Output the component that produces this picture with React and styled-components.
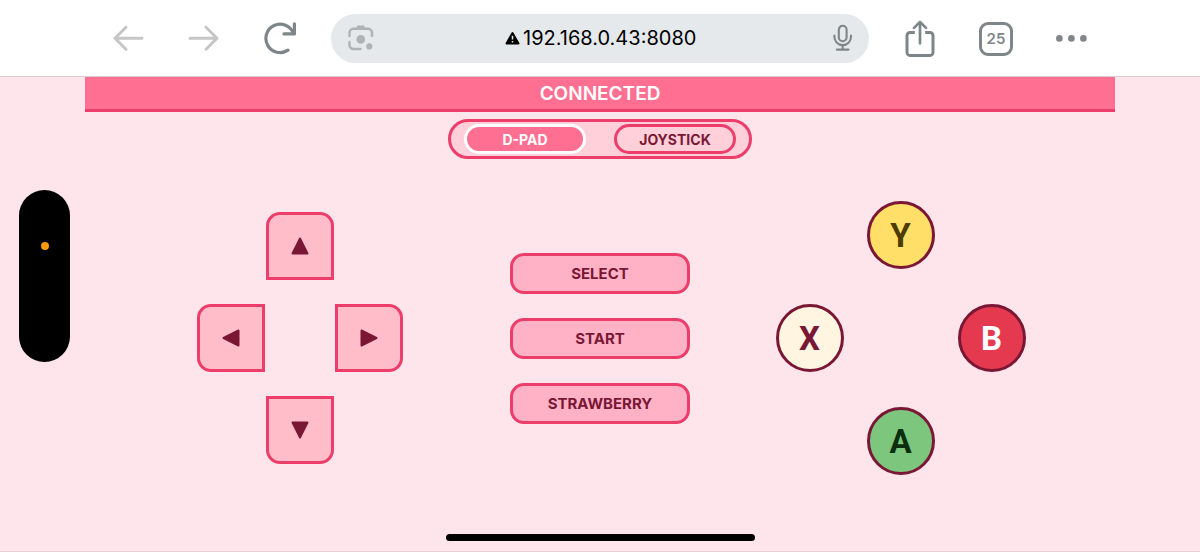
import React from 'react'
import styled, { createGlobalStyle } from 'styled-components'

const pageBg = "#fee5eb";
const rose = "#ff6f91";
const roseDark = "#ec3d6b";
const wine = "#7a1735";
const gray = "#7f8689";
const grayLight = "#c6c6c6";

const GlobalStyle = createGlobalStyle`
	* {
		box-sizing: border-box;
	}
	body {
		margin: 0;
		background: ${pageBg};
		font-family: Inter, "Liberation Sans", sans-serif;
	}
	button, input {
		font-family: inherit;
		margin: 0;
		padding: 0;
	}
	button {
		cursor: pointer;
	}
	svg {
		display: block;
		flex: none;
	}
`

const Page = styled.div`
	position: relative;
	display: flex;
	flex-direction: column;
	min-height: 100vh;
	border-bottom: 1px solid #e6d0d6;
`

const Toolbar = styled.header`
	display: flex;
	align-items: center;
	gap: 13px;
	padding: 14px 90px 13px;
	background: white;
	border-bottom: 1px solid #dccdd2;
`

const ToolGroup = styled.nav`
	display: flex;
`

const ToolButton = styled.button`
	display: flex;
	align-items: center;
	justify-content: center;
	width: 76px;
	height: 49px;
	border: none;
	background: none;
	color: ${props => props.$faded ? grayLight : gray};
`

const AddressBar = styled.div`
	flex: 1;
	display: flex;
	align-items: center;
	justify-content: space-between;
	height: 49px;
	padding: 0 16px;
	border-radius: 25px;
	background: #e5e9ec;
`

const BarButton = styled.button`
	display: flex;
	border: none;
	background: none;
	color: ${props => props.$faded ? "#b0b3b6" : gray};
`

const Address = styled.label`
	display: flex;
	align-items: center;
	gap: 3px;
	padding-bottom: 2px;
`

const AddressInput = styled.input`
	width: 180px;
	border: none;
	outline: none;
	background: none;
	color: black;
	font-size: 20px;
	line-height: 24px;
`

const TabCount = styled.span`
	display: flex;
	align-items: center;
	justify-content: center;
	width: 34px;
	height: 34px;
	border: 3px solid ${gray};
	border-radius: 9px;
	font-size: 15px;
	font-weight: 600;
`

const Gamepad = styled.main`
	flex: 1;
	display: flex;
	flex-direction: column;
	align-items: center;
	padding: 0 85px;
`

const Status = styled.div`
	width: 100%;
	padding: 5px 0 3px;
	border-bottom: 3px solid ${roseDark};
	background: ${rose};
	color: white;
	font-size: 19px;
	font-weight: 600;
	line-height: 24px;
	text-align: center;
`

const ModeSwitch = styled.div`
	display: flex;
	gap: 28px;
	margin-top: 7px;
	padding: 2px 13px;
	border: 3px solid ${roseDark};
	border-radius: 20px;
	background: #ffcfda;
`

const ModeButton = styled.button`
	width: 122px;
	height: 30px;
	border: 3px solid ${props => props.$active ? "white" : roseDark};
	border-radius: 15px;
	background: ${props => props.$active ? rose : "#ffcfda"};
	color: ${props => props.$active ? "white" : wine};
	font-size: 14px;
	font-weight: 700;
`

const Controls = styled.div`
	flex: 1;
	display: grid;
	grid-template-columns: 1fr 180px 1fr;
	align-items: center;
	justify-items: center;
	gap: 20px;
	width: 100%;
	padding: 0 24px;
`

const Pad = styled.div`
	display: grid;
	grid-template-columns: repeat(3, 68px);
	grid-template-rows: repeat(3, 68px);
	grid-template-areas:
		". up ."
		"left . right"
		". down .";
	gap: ${props => props.$gap};
`

const corners = {
	up: "14px 14px 0 0",
	left: "14px 0 0 14px",
	right: "0 14px 14px 0",
	down: "0 0 14px 14px",
}

const ArrowButton = styled.button`
	grid-area: ${props => props.$side};
	display: flex;
	align-items: center;
	justify-content: center;
	border: 3px solid ${roseDark};
	border-radius: ${props => corners[props.$side]};
	background: #ffbdca;
	color: ${wine};
`

const FaceButton = styled.button`
	grid-area: ${props => props.$side};
	border: 3px solid ${wine};
	border-radius: 50%;
	background: ${props => props.$bg};
	color: ${props => props.$color};
	font-family: Roboto, sans-serif;
	font-size: 33px;
	font-weight: 700;
`

const Menu = styled.div`
	display: flex;
	flex-direction: column;
	gap: 24px;
	width: 100%;
`

const MenuButton = styled.button`
	height: 41px;
	border: 3px solid ${roseDark};
	border-radius: 14px;
	background: #ffb1c5;
	color: ${wine};
	font-size: 15px;
	font-weight: 700;
`

const HomeArea = styled.footer`
	display: flex;
	justify-content: center;
	padding: 17px 0 10px;
`

const HomeBar = styled.div`
	width: 309px;
	height: 7px;
	border-radius: 4px;
	background: black;
`

// phone camera cutout, sits over the left side of the page
const Island = styled.div`
	position: absolute;
	top: 50%;
	left: 19px;
	transform: translateY(-50%);
	display: flex;
	justify-content: center;
	width: 51px;
	height: 172px;
	padding-top: 52px;
	border-radius: 26px;
	background: black;
`

const IslandDot = styled.span`
	width: 8px;
	height: 8px;
	border-radius: 50%;
	background: #ff9a0a;
`

const stroke = {
	fill: "none",
	stroke: "currentColor",
	strokeLinecap: "round",
	strokeLinejoin: "round",
}

const BackIcon = () => (
	<svg width="32" height="29" viewBox="0 0 32 29" strokeWidth="3" {...stroke}>
		<path d="M30 14.2H3M14 3.2L3 14.2L14 25.2" />
	</svg>
)

const ForwardIcon = () => (
	<svg width="32" height="29" viewBox="0 0 32 29" strokeWidth="3" {...stroke}>
		<path d="M2 14.2H29M18 3.2L29 14.2L18 25.2" />
	</svg>
)

const ReloadIcon = () => (
	<svg width="34" height="35" viewBox="0 0 34 35" strokeWidth="3.2" {...stroke}>
		<path d="M25 29.2A14.2 14.2 0 1 1 30.4 12.4" />
		<path d="M31.4 2.8V12.9H21" />
	</svg>
)

const LensIcon = () => (
	<svg width="28" height="29" viewBox="0 0 28 29" strokeWidth="2.4" {...stroke}>
		<path d="M2.5 12V8.5A4 4 0 0 1 6.5 4.8H21A4 4 0 0 1 25 8.5V12M2.5 18V21A4 4 0 0 0 6.5 25H13.5" />
		<path d="M9 5L10.3 1.6H17L18.3 5Z" fill="currentColor" stroke="none" />
		<circle cx="13.8" cy="15.4" r="4.3" fill="currentColor" stroke="none" />
		<circle cx="22.3" cy="22.4" r="3.1" fill="currentColor" stroke="none" />
	</svg>
)

const MicIcon = () => (
	<svg width="20" height="29" viewBox="0 0 20 29" strokeWidth="2.1" {...stroke}>
		<rect x="5.8" y="1.8" width="7.8" height="15.4" rx="3.9" />
		<path d="M1.4 11.5V12.8A8.3 8.3 0 0 0 18 12.8V11.5M9.7 21V25.4M3.9 25.6H15.5" />
	</svg>
)

const WarningIcon = () => (
	<svg width="15" height="15" viewBox="0 0 15 15">
		<path d="M7.5 3L13.5 13.5H1.5Z" fill="black" stroke="black" strokeWidth="2" strokeLinejoin="round" />
		<path d="M7.5 5.8V9.6M7.5 11V12.5" stroke="#e5e9ec" strokeWidth="1.5" />
	</svg>
)

const ShareIcon = () => (
	<svg width="30" height="37" viewBox="0 0 30 37" strokeWidth="3" {...stroke}>
		<path d="M9.8 12.4H5A3 3 0 0 0 2 15.4V32.4A3 3 0 0 0 5 35.4H25A3 3 0 0 0 28 32.4V15.4A3 3 0 0 0 25 12.4H20.2" strokeLinecap="butt" />
		<path d="M15 23.3V2.5M9 7.9L15 1.9L21 7.9" strokeWidth="2.7" />
	</svg>
)

const DotsIcon = () => (
	<svg width="32" height="9" viewBox="0 0 32 9" fill="currentColor">
		<circle cx="3.4" cy="4.4" r="3.3" />
		<circle cx="15.4" cy="4.4" r="3.3" />
		<circle cx="27.4" cy="4.4" r="3.3" />
	</svg>
)

const triangles = {
	up: "9 1.5 16.5 16.5 1.5 16.5",
	down: "1.5 1.5 16.5 1.5 9 16.5",
	left: "1.5 9 16.5 1.5 16.5 16.5",
	right: "1.5 1.5 16.5 9 1.5 16.5",
}

const Triangle = ({ side }) => (
	<svg width="18" height="18" viewBox="0 0 18 18">
		<polygon points={triangles[side]} fill="currentColor" stroke="currentColor" strokeWidth="2" strokeLinejoin="round" />
	</svg>
)

const faceButtons = [
	{ name: "Y", side: "up", bg: "#ffdf68", color: "#4d3b00" },
	{ name: "X", side: "left", bg: "#fff5e1", color: wine },
	{ name: "B", side: "right", bg: "#e5394f", color: "white" },
	{ name: "A", side: "down", bg: "#7dc67d", color: "#0b2e0f" },
]

function App() {
	const [mode, setMode] = React.useState("D-PAD");

	return (
		<Page>
			<GlobalStyle />
			<Toolbar>
				<ToolGroup>
					<ToolButton $faded aria-label="Back"><BackIcon /></ToolButton>
					<ToolButton $faded aria-label="Forward"><ForwardIcon /></ToolButton>
					<ToolButton aria-label="Reload"><ReloadIcon /></ToolButton>
				</ToolGroup>
				<AddressBar>
					<BarButton $faded aria-label="Search by image"><LensIcon /></BarButton>
					<Address>
						<WarningIcon />
						<AddressInput type="text" aria-label="Address" defaultValue="192.168.0.43:8080" />
					</Address>
					<BarButton aria-label="Voice search"><MicIcon /></BarButton>
				</AddressBar>
				<ToolGroup>
					<ToolButton aria-label="Share"><ShareIcon /></ToolButton>
					<ToolButton aria-label="Tabs"><TabCount>25</TabCount></ToolButton>
					<ToolButton aria-label="More"><DotsIcon /></ToolButton>
				</ToolGroup>
			</Toolbar>

			<Gamepad>
				<Status>CONNECTED</Status>
				<ModeSwitch>
					{["D-PAD", "JOYSTICK"].map(name => (
						<ModeButton
							key={name}
							$active={mode === name}
							aria-pressed={mode === name}
							onClick={() => setMode(name)}
						>
							{name}
						</ModeButton>
					))}
				</ModeSwitch>
				<Controls>
					<Pad $gap="24px 1px">
						{["up", "left", "right", "down"].map(side => (
							<ArrowButton key={side} $side={side} aria-label={side}>
								<Triangle side={side} />
							</ArrowButton>
						))}
					</Pad>
					<Menu>
						<MenuButton>SELECT</MenuButton>
						<MenuButton>START</MenuButton>
						<MenuButton>STRAWBERRY</MenuButton>
					</Menu>
					<Pad $gap="35px 23px">
						{faceButtons.map(b => (
							<FaceButton key={b.name} $side={b.side} $bg={b.bg} $color={b.color}>
								{b.name}
							</FaceButton>
						))}
					</Pad>
				</Controls>
			</Gamepad>

			<HomeArea>
				<HomeBar />
			</HomeArea>
			<Island>
				<IslandDot />
			</Island>
		</Page>
	)
}

export default App
